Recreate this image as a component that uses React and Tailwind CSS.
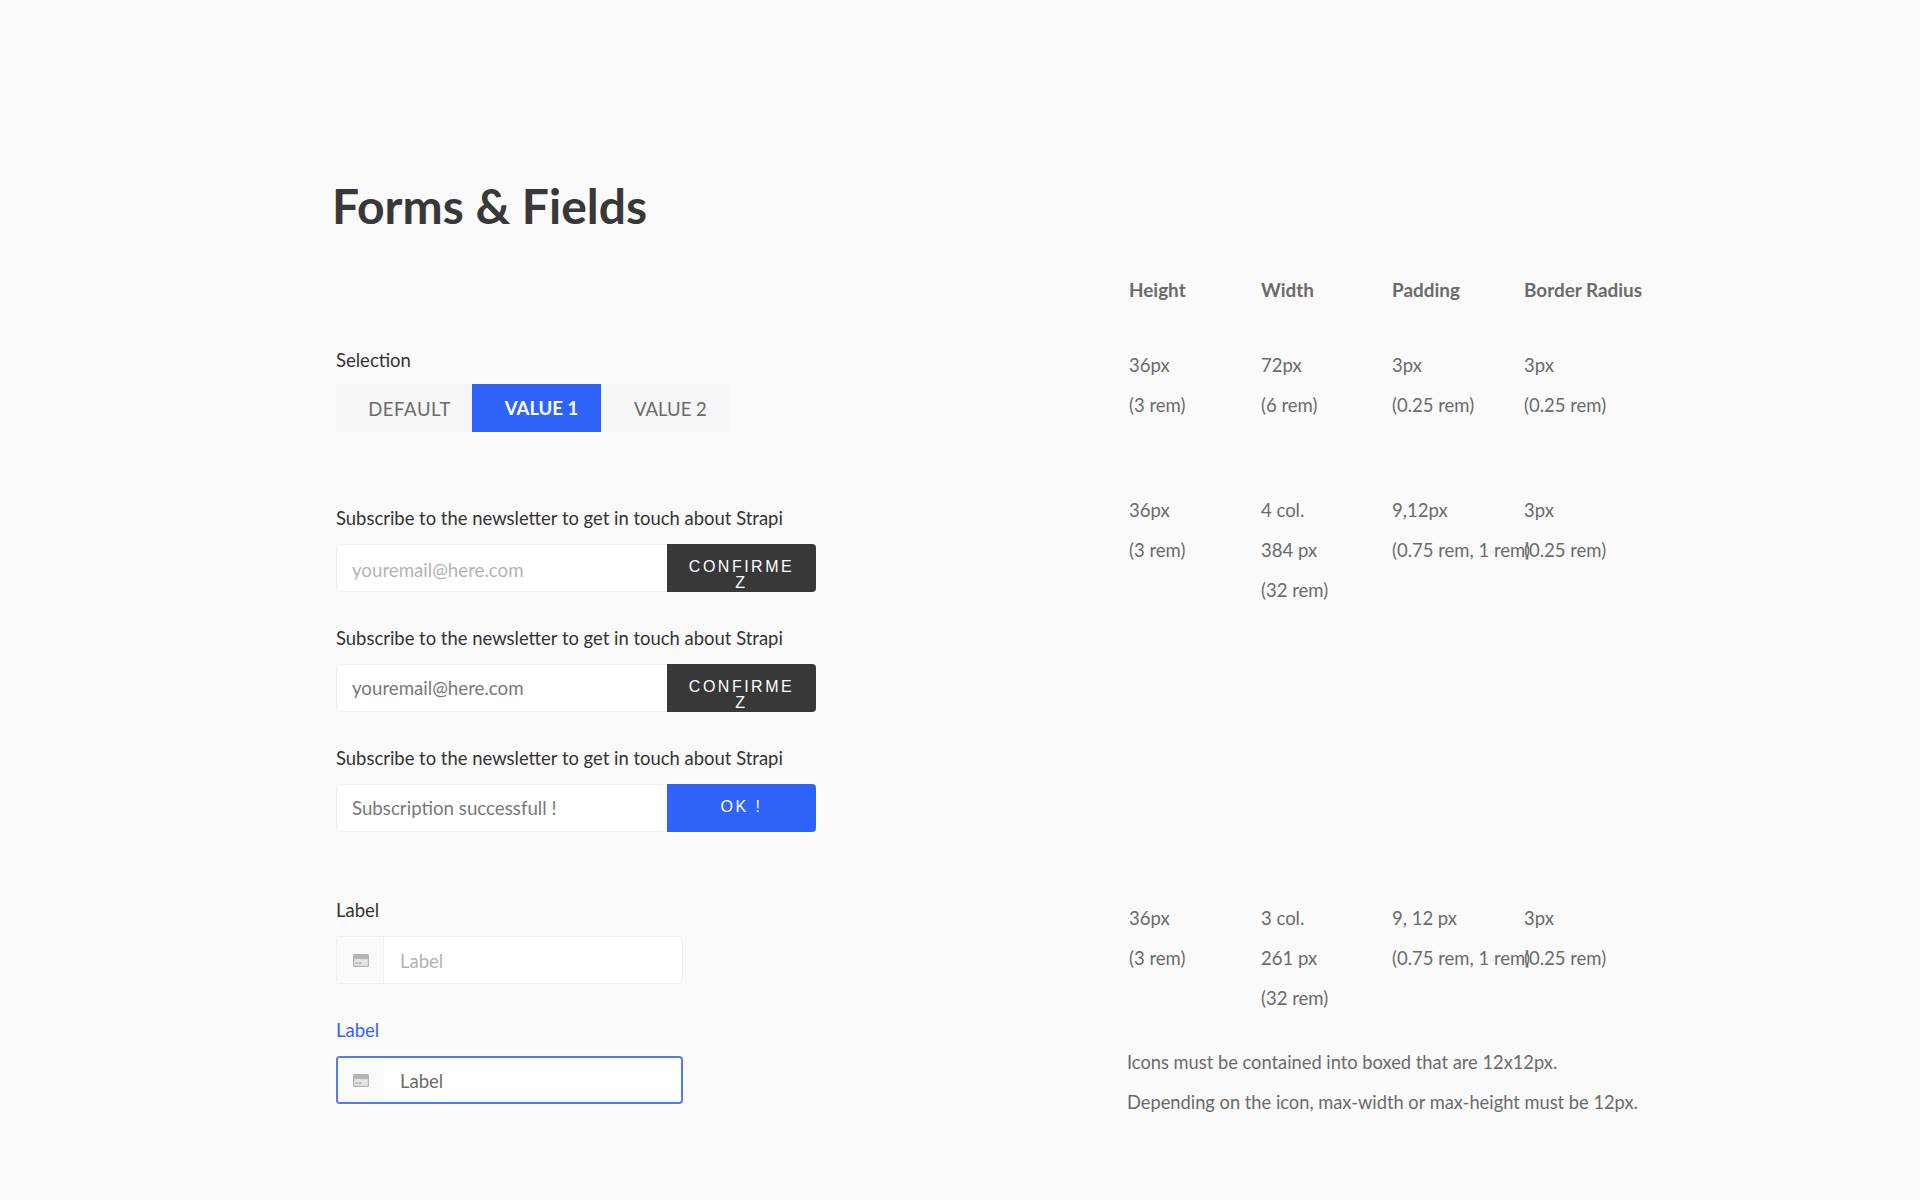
const SPECS = {
  selection: [['36px', '(3 rem)'], ['72px', '(6 rem)'], ['3px', '(0.25 rem)'], ['3px', '(0.25 rem)']],
  newsletter: [['36px', '(3 rem)'], ['4 col.', '384 px', '(32 rem)'], ['9,12px', '(0.75 rem, 1 rem)'], ['3px', '(0.25 rem)']],
  label: [['36px', '(3 rem)'], ['3 col.', '261 px', '(32 rem)'], ['9, 12 px', '(0.75 rem, 1 rem)'], ['3px', '(0.25 rem)']],
}

function CardIcon() {
  return (
    <svg width="16" height="13" viewBox="0 0 16 13" fill="none">
      <rect x="0" y="0" width="16" height="13" rx="1.5" fill="#b3b3b3" />
      <rect x="1.2" y="5" width="13.6" height="6.8" fill="#e4e4e4" />
      <rect x="2.5" y="8.5" width="2" height="1.2" fill="#9a9a9a" />
      <rect x="5.5" y="8.5" width="3" height="1.2" fill="#9a9a9a" />
    </svg>
  )
}

function SpecRow({ cols, className = '' }) {
  return (
    <div className={`grid grid-cols-[132px_131px_132px_1fr] text-[18.5px] leading-[40px] text-[#6b6b6b] whitespace-nowrap ${className}`}>
      {cols.map((lines, i) => (
        <div key={i}>
          {lines.map((line) => (
            <div key={line}>{line}</div>
          ))}
        </div>
      ))}
    </div>
  )
}

function Newsletter({ text, textColor, button, buttonBg, className = '' }) {
  return (
    <div className={className}>
      <div className="text-[18.45px] leading-[24px] text-[#333333]">Subscribe to the newsletter to get in touch about Strapi</div>
      <div className="flex w-[480px] h-[48px] mt-[14px]">
        <div className={`flex-1 flex items-center pl-[15px] bg-white border border-[#efefef] border-r-0 rounded-l-[4px] text-[18.7px] ${textColor}`}>
          {text}
        </div>
        <div className={`w-[149px] px-[18px] pt-[15px] rounded-r-[4px] text-white text-center break-all text-[16px] leading-[16px] tracking-[2.5px] font-['Liberation_Sans',sans-serif] ${buttonBg}`}>
          {button}
        </div>
      </div>
    </div>
  )
}

function LabelField({ label, labelColor, text, textColor, frame, iconBg }) {
  return (
    <div>
      <div className={`text-[18.5px] leading-[24px] ${labelColor}`}>{label}</div>
      <div className={`flex w-[347px] h-[48px] mt-[14px] bg-white rounded-[4px] overflow-hidden ${frame}`}>
        <div className={`flex items-center justify-center ${iconBg}`}>
          <CardIcon />
        </div>
        <div className={`flex-1 flex items-center pl-[16px] pt-[3px] text-[18.5px] ${textColor}`}>{text}</div>
      </div>
    </div>
  )
}

export default function App() {
  return (
    <div className="min-h-[1200px] bg-[#fafafa] font-['Lato',sans-serif] flex pl-[336px] pt-[174px]">
      <div className="w-[793px] shrink-0">
        <h1 className="-ml-[4px] text-[48px] leading-[64px] font-bold text-[#383838]">Forms &amp; Fields</h1>

        <div className="mt-[110px] text-[18.5px] leading-[24px] text-[#333333]">Selection</div>
        <div className="flex w-[394px] h-[48px] mt-[12px] bg-[#f6f6f6] rounded-[4px] text-[18.5px] text-[#6b6b6b]">
          <div className="w-[136px] flex items-center justify-end pr-[21px] pt-[3px] tracking-[0.6px]">DEFAULT</div>
          <div className="w-[129px] flex items-center justify-center pl-[10px] pt-[2px] font-bold text-white bg-[#2f64fa]">VALUE 1</div>
          <div className="flex-1 flex items-center pl-[33px] pt-[3px]">VALUE 2</div>
        </div>

        <Newsletter
          className="mt-[74px]"
          text={<span className="pt-[5px]">youremail@here.com</span>}
          textColor="text-[#b3b3b3]"
          button="CONFIRMEZ"
          buttonBg="bg-[#383838]"
        />
        <Newsletter
          className="mt-[34px]"
          text="youremail@here.com"
          textColor="text-[#787878]"
          button="CONFIRMEZ"
          buttonBg="bg-[#383838]"
        />
        <Newsletter
          className="mt-[34px]"
          text="Subscription successfull !"
          textColor="text-[#787878]"
          button="OK !"
          buttonBg="bg-[#2f64fa]"
        />

        <div className="mt-[66px]">
          <LabelField
            label="Label"
            labelColor="text-[#333333]"
            text="Label"
            textColor="text-[#b3b3b3]"
            frame="border border-[#efefef]"
            iconBg="w-[47px] pl-[2px] bg-[#fafafa] border-r border-[#efefef]"
          />
        </div>
        <div className="mt-[34px]">
          <LabelField
            label="Label"
            labelColor="text-[#2f64fa]"
            text="Label"
            textColor="text-[#6b6b6b]"
            frame="border-2 border-[#4f7cf5]"
            iconBg="w-[46px] bg-[#fafafa]"
          />
        </div>
      </div>

      <div className="flex-1">
        <div className="mt-[96px] grid grid-cols-[132px_131px_132px_1fr] text-[18.9px] leading-[40px] font-bold text-[#6b6b6b]">
          <div>Height</div>
          <div>Width</div>
          <div>Padding</div>
          <div>Border Radius</div>
        </div>
        <SpecRow cols={SPECS.selection} className="mt-[35px]" />
        <SpecRow cols={SPECS.newsletter} className="mt-[65px]" />
        <SpecRow cols={SPECS.label} className="mt-[288px]" />
        <div className="-ml-[2px] mt-[24px] text-[18.3px] leading-[40px] text-[#6b6b6b]">
          <div>Icons must be contained into boxed that are 12x12px.</div>
          <div>Depending on the icon, max-width or max-height must be 12px.</div>
        </div>
      </div>
    </div>
  )
}
